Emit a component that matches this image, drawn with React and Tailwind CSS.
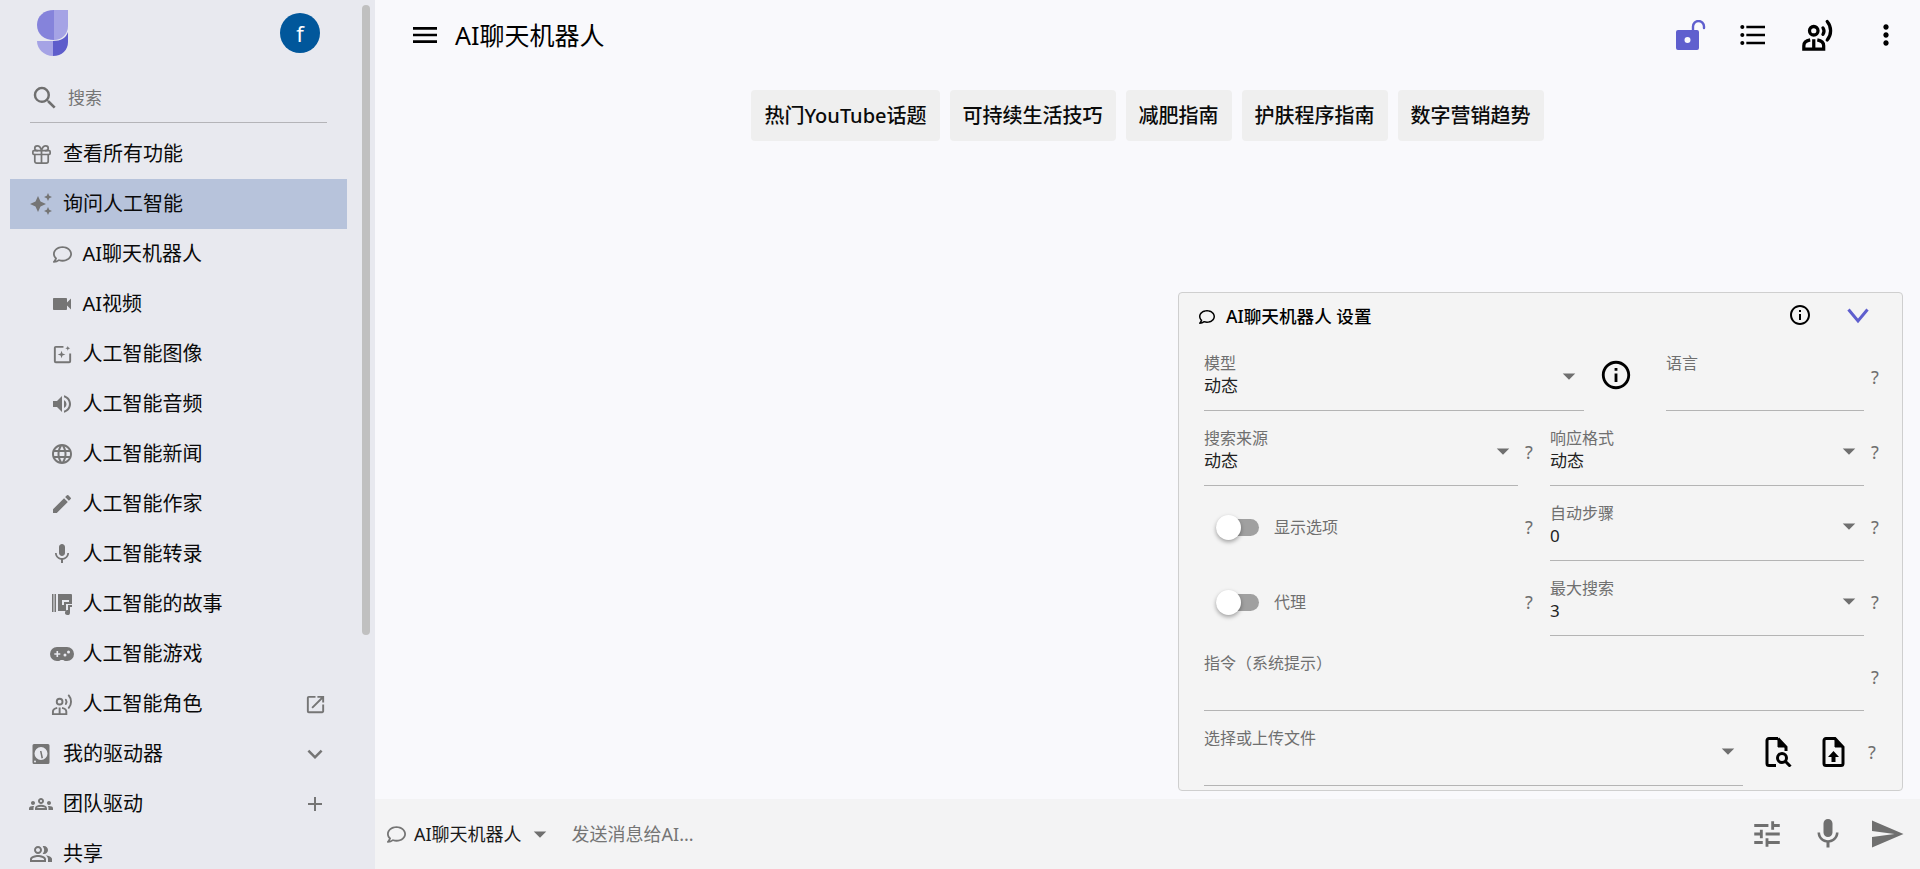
import React from "react";
import {
  MdAutoAwesome, MdVideocam, MdVolumeUp, MdLanguage, MdEdit, MdMic,
  MdOpenInNew, MdExpandMore, MdAdd, MdOutlineGroups, MdOutlinePeopleAlt, MdSearch,
  MdMoreVert, MdFormatListBulleted, MdInfoOutline, MdTune, MdSend, MdArrowDropDown, MdMenu,
} from "react-icons/md";
import { FaRegComment } from "react-icons/fa";
import { Gift } from "lucide-react";

const FONT = "[font-family:'Noto_Sans','Noto_Sans_CJK_SC',sans-serif]";

const ImageIcon = ({ size = 24 }) => (
  <svg width={size} height={size} viewBox="0 0 24 24" fill="currentColor">
    <path d="M19 19H5V5h8V3H5a2 2 0 0 0-2 2v14a2 2 0 0 0 2 2h14a2 2 0 0 0 2-2v-8h-2z" />
    <path d="M11 8l1 3 3 1-3 1-1 3-1-3-3-1 3-1zM17.500 3l.7 1.800 1.800.7-1.800.7-.7 1.800-.7-1.800-1.800-.7 1.800-.7z" />
  </svg>
);

const StoriesIcon = ({ size = 24 }) => (
  <svg width={size} height={size} viewBox="0 0 24 24" fill="currentColor">
    <path d="M2 2h1.500v18H2zM4.500 2H6v18H4.500zM8 2h13a1 1 0 0 1 1 1v9h-6v7H8z" />
    <path d="M12 8h7v2h-5v3h-2z" fill="#e8e9ef" />
    <path d="M18 13h4v2h-2v5.500a2.500 2.500 0 1 1-2-2.400z" />
  </svg>
);

const GameIcon = ({ size = 24 }) => (
  <svg width={size} height={size} viewBox="0 0 24 24" fill="currentColor">
    <path fillRule="evenodd" d="M7 5h10a7 7 0 0 1 0 14h-1.500a3 3 0 0 1-2.200-1h-2.600a3 3 0 0 1-2.200 1H7A7 7 0 0 1 7 5zm-.5 4v2.200H4.300v1.600h2.200V15h1.600v-2.200h2.200v-1.600H8.100V9zm8.500 2.500a1.500 1.500 0 1 0 0 3 1.500 1.500 0 0 0 0-3zm3.500-3a1.500 1.500 0 1 0 0 3 1.500 1.500 0 0 0 0-3z" />
  </svg>
);

const PersonaIcon = ({ size = 24, sw = 2 }) => (
  <svg width={size} height={size} viewBox="0 0 24 24" fill="none" stroke="currentColor" strokeWidth={sw}>
    <circle cx="9" cy="9" r="3" />
    <path d="M6.500 15.500C4 16 2 17.500 2 19.500V22h14v-2.500c0-2-2-3.500-4.500-4M9 15v7" />
    <path d="M15.500 7a4 4 0 0 1 0 4.500M18.500 2.500a10 10 0 0 1 0 13" strokeLinecap="round" />
  </svg>
);

const DriveIcon = ({ size = 24 }) => (
  <svg width={size} height={size} viewBox="0 0 24 24" fill="currentColor">
    <path fillRule="evenodd" d="M5 2h14a1.500 1.500 0 0 1 1.500 1.500v17A1.500 1.500 0 0 1 19 22H5a1.500 1.500 0 0 1-1.500-1.500v-17A1.500 1.500 0 0 1 5 2zm7 3a6.500 6.500 0 1 0 0 13 6.500 6.500 0 0 0 0-13z" />
    <path d="M11 9l1.500 0 1.500 7-1.500.5z" />
    <circle cx="6" cy="19.500" r="1" fill="#e8e9ef" />
  </svg>
);

const LockIcon = () => (
  <svg width="30" height="30" viewBox="0 0 30 30" fill="#5f5fce">
    <path fillRule="evenodd" d="M2 10h19a2 2 0 0 1 2 2v16a2 2 0 0 1-2 2H2a2 2 0 0 1-2-2V12a2 2 0 0 1 2-2zm9.500 7a3 3 0 1 0 0 6 3 3 0 0 0 0-6z" />
    <path d="M17 11V6.500a5.500 5.500 0 0 1 11 0V8" fill="none" stroke="#5f5fce" strokeWidth="2.400" strokeLinecap="round" />
  </svg>
);

const FindDoc = () => (
  <svg width="28" height="30" viewBox="0 0 28 30" fill="none" stroke="#000" strokeWidth="3">
    <path d="M13 1.500H4a2 2 0 0 0-2 2v23a2 2 0 0 0 2 2h7M13 1.500L21 10v4" />
    <path d="M13 2l8 8h-8z" fill="#000" strokeWidth="1" />
    <circle cx="17" cy="21" r="4.500" />
    <path d="M20.500 24.500l5 5" />
  </svg>
);

const UploadDoc = () => (
  <svg width="24" height="30" viewBox="0 0 24 30" fill="none" stroke="#000" strokeWidth="3">
    <path d="M13 1.500H4a2 2 0 0 0-2 2v23a2 2 0 0 0 2 2h15a2 2 0 0 0 2-2V10z" />
    <path d="M13 2l8 8h-8z" fill="#000" strokeWidth="1" />
    <path d="M11.500 14l5.500 6h-3.500v5h-4v-5H6z" fill="#000" stroke="none" />
  </svg>
);

const Logo = () => (
  <svg width="32" height="47" viewBox="0 0 32 47">
    <path d="M17 0C7 0 0 6 0 15s7 15 17 15z" fill="#8583db" />
    <path d="M17 0h14v16c0 8-6 14-14 14z" fill="#a5a3e5" />
    <path d="M0 31h16v15C7 46 0 39 0 31z" fill="#a5a3e5" />
    <path d="M16 46V31c8 0 13-3 15-9v10c0 8-6 14-15 14z" fill="#5e5dcb" />
  </svg>
);

const Row = ({ icon, label, sub, active, right }) => (
  <div className={`flex items-center h-[50px] ${active ? "bg-[#b7c3db] ml-[10px] pl-[19px]" : sub ? "pl-[50px]" : "pl-[29px]"} pr-[20px]`}>
    <span className="w-[24px] h-[24px] flex items-center justify-center text-[#757575] shrink-0">{icon}</span>
    <span className={`${sub ? "ml-[8.5px]" : "ml-[10px]"} text-[20px] text-[#0a0a0a] whitespace-nowrap`}>{label}</span>
    {right && <span className="ml-auto text-[#757575] flex items-center w-[24px] justify-center">{right}</span>}
  </div>
);

const Help = () => <span className="text-[18px] text-[#6f6f6f] w-[24px] text-center shrink-0 pt-[7px] -translate-x-[1px]">?</span>;

const Field = ({ label, value, w, arrow = true, help = true }) => (
  <div className="flex items-center h-[75px]">
    <div className={`${w} h-[75px] border-b border-[#b4b4b4] relative flex flex-col pt-[16px] shrink-0`}>
      <span className="text-[16px] leading-[22px] text-[#6f6f6f] whitespace-nowrap">{label}</span>
      <span className="text-[17px] leading-[24px] text-[#222222] h-[24px]">{value}</span>
      {arrow && (
        <span className="absolute right-[0px] top-[25px] text-[#6f6f6f]">
          <MdArrowDropDown size={30} />
        </span>
      )}
    </div>
    {help && <Help />}
  </div>
);

const Toggle = ({ label }) => (
  <div className="flex items-center h-[75px] w-[338px] pt-[7px]">
    <div className="flex items-center pl-[12px] w-[70px] shrink-0">
      <div className="relative w-[43px] h-[17px] bg-[#a0a0a0] rounded-full">
        <div className="absolute left-[0px] top-[-4px] w-[25px] h-[25px] rounded-full bg-white shadow-[0_2px_4px_rgba(0,0,0,0.35)]" />
      </div>
    </div>
    <span className="text-[16px] text-[#6f6f6f] flex-1">{label}</span>
    <span className="text-[18px] text-[#6f6f6f] w-[24px] text-center shrink-0 -translate-x-[1px]">?</span>
  </div>
);

export default function App() {
  const chips = ["热门YouTube话题", "可持续生活技巧", "减肥指南", "护肤程序指南", "数字营销趋势"];
  return (
    <div className={`${FONT} flex w-[1920px] h-[869px] overflow-hidden bg-[#f9f9fc]`}>
      <aside className="w-[375px] h-[869px] bg-[#e8e9ef] shrink-0 flex overflow-hidden">
        <div className="w-[347px] shrink-0">
          <div className="flex items-start h-[73px] pl-[37px]">
            <div className="pt-[10px]"><Logo /></div>
            <div className="ml-[211px] mt-[13px] w-[40px] h-[40px] rounded-full bg-[#01579b] text-white flex items-center justify-center text-[22px]">f</div>
          </div>
          <div className="flex items-center h-[50px] ml-[30px] mr-[20px] border-b border-[#b4b4b8]">
            <MdSearch size={30} className="text-[#6f6f6f]" />
            <span className="ml-[8px] text-[17px] text-[#757575]">搜索</span>
          </div>
          <div className="mt-[6px]">
            <Row icon={<Gift size={23} strokeWidth={1.8} />} label="查看所有功能" />
            <Row active icon={<MdAutoAwesome size={24} />} label="询问人工智能" />
            <Row sub icon={<FaRegComment size={19} />} label="AI聊天机器人" />
            <Row sub icon={<MdVideocam size={24} />} label="AI视频" />
            <Row sub icon={<ImageIcon size={23} />} label="人工智能图像" />
            <Row sub icon={<MdVolumeUp size={24} />} label="人工智能音频" />
            <Row sub icon={<MdLanguage size={24} />} label="人工智能新闻" />
            <Row sub icon={<MdEdit size={24} />} label="人工智能作家" />
            <Row sub icon={<MdMic size={24} />} label="人工智能转录" />
            <Row sub icon={<StoriesIcon size={24} />} label="人工智能的故事" />
            <Row sub icon={<GameIcon size={24} />} label="人工智能游戏" />
            <Row sub icon={<PersonaIcon size={23} />} label="人工智能角色" right={<MdOpenInNew size={23} className="shrink-0" />} />
            <Row icon={<DriveIcon size={24} />} label="我的驱动器" right={<MdExpandMore size={30} className="shrink-0" />} />
            <Row icon={<MdOutlineGroups size={26} />} label="团队驱动" right={<MdAdd size={24} className="shrink-0" />} />
            <Row icon={<MdOutlinePeopleAlt size={24} />} label="共享" />
          </div>
        </div>
        <div className="ml-[15px] w-[8px] mt-[5px] h-[630px] bg-[#c0c0c0] rounded-full" />
      </aside>

      <main className="flex-1 min-w-0 flex flex-col h-[869px]">
        <header className="h-[70px] flex items-center pl-[36px] pr-[18px] text-black">
          <MdMenu size={32} className="shrink-0 -ml-[2px]" />
          <span className="ml-[14px] text-[25px] pt-[2px]">AI聊天机器人</span>
          <div className="ml-auto flex items-center">
            <LockIcon />
            <div className="ml-[31px]"><MdFormatListBulleted size={32} /></div>
            <div className="ml-[32px]"><PersonaIcon size={34} sw={2.3} /></div>
            <div className="ml-[35px]"><MdMoreVert size={32} /></div>
          </div>
        </header>

        <div className="flex justify-center gap-[10px] mt-[20px]">
          {chips.map((c) => (
            <div key={c} className="h-[51px] px-[13px] flex items-center bg-[#efefef] rounded-[4px] text-[20px] font-medium text-[#0a0a0a] whitespace-nowrap">{c}</div>
          ))}
        </div>

        <div className="flex-1 min-h-0 flex justify-end items-end pr-[17px] pb-[8px]">
          <section className="w-[725px] h-[499px] border border-[#cfcfcf] rounded-[4px] bg-[#f4f4f4] pl-[25px]">
            <div className="h-[43px] flex items-center text-black pr-[32px] pt-[4px]">
              <FaRegComment size={16} className="shrink-0 -ml-[5px]" />
              <span className="ml-[11px] text-[17.6px] font-medium whitespace-nowrap">AI聊天机器人 设置</span>
              <div className="ml-auto flex items-center gap-[34px] -mt-[4px]">
                <MdInfoOutline size={24} />
                <svg width="24" height="24" viewBox="0 0 24 24" fill="none" stroke="#5f5fce" strokeWidth="3"><path d="M2.500 6.500L12 18l9.500-11.500" /></svg>
              </div>
            </div>
            <div className="flex">
              <div className="w-[380px] shrink-0">
                <Field w="w-[380px]" label="模型" value="动态" help={false} />
              </div>
              <div className="w-[82px] flex items-center justify-center pt-[3px]"><MdInfoOutline size={34} className="text-black -ml-[18px]" /></div>
              <Field w="w-[198px]" label="语言" value="" arrow={false} />
            </div>
            <div className="flex gap-[8px]">
              <Field w="w-[314px]" label="搜索来源" value="动态" />
              <Field w="w-[314px]" label="响应格式" value="动态" />
            </div>
            <div className="flex gap-[8px]">
              <Toggle label="显示选项" />
              <Field w="w-[314px]" label="自动步骤" value="0" />
            </div>
            <div className="flex gap-[8px]">
              <Toggle label="代理" />
              <Field w="w-[314px]" label="最大搜索" value="3" />
            </div>
            <Field w="w-[660px]" label="指令（系统提示）" value="" arrow={false} />
            <div className="flex items-center h-[75px]">
              <Field w="w-[539px]" label="选择或上传文件" value="" help={false} />
              <div className="flex items-center pt-[6px]">
                <div className="ml-[22px]"><FindDoc /></div>
                <div className="ml-[29px]"><UploadDoc /></div>
              </div>
              <span className="ml-[15px] flex"><Help /></span>
            </div>
          </section>
        </div>

        <footer className="h-[70px] bg-[#f3f3f4] flex items-center pl-[12px] pr-[15px] shrink-0">
          <FaRegComment size={19} className="text-[#757575]" />
          <span className="ml-[8px] text-[18px] text-[#1a1a1a]">AI聊天机器人</span>
          <MdArrowDropDown size={30} className="text-[#6f6f6f] ml-[3px]" />
          <span className="ml-[17px] text-[18px] text-[#757575]">发送消息给AI...</span>
          <div className="ml-auto flex items-center text-[#6f6f6f]">
            <MdTune size={34} />
            <MdMic size={36} className="ml-[26px]" />
            <MdSend size={36} className="ml-[23px]" />
          </div>
        </footer>
      </main>
    </div>
  );
}
